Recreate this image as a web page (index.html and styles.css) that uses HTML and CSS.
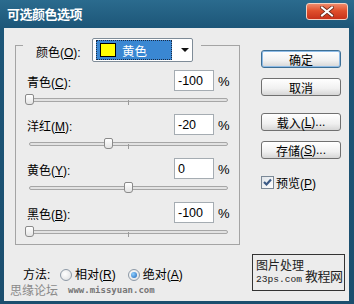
FILE: index.html
```html
<!DOCTYPE html>
<html>
<head>
<meta charset="utf-8">
<link rel="stylesheet" href="styles.css">
</head>
<body>
<div class="window">
  <div class="titlebar">
    <span class="title">可选颜色选项</span>
    <span class="close">
      <svg width="14" height="11" viewBox="0 0 14 11"><path d="M2 1.5 L12 9.5 M12 1.5 L2 9.5" stroke="#6b2a1a" stroke-width="3.6" stroke-linecap="square"/><path d="M2 1.5 L12 9.5 M12 1.5 L2 9.5" stroke="#fff" stroke-width="2" stroke-linecap="square"/></svg>
    </span>
  </div>
  <div class="client">
    <div class="main">
      <div class="group">
        <div class="legend">
          <span class="lbl">颜色(<u>O</u>):</span>
          <div class="select">
            <div class="sel-inner"><span class="swatch"></span><span class="sel-text">黄色</span></div>
            <span class="arrow"></span>
          </div>
        </div>
        <div class="field">
          <div class="field-row"><span class="flabel">青色(<u>C</u>):</span><span class="input">-100</span><span class="pct">%</span></div>
          <div class="slider"><div class="track"></div><div class="tick"></div><div class="thumb" style="left:9px"></div></div>
        </div>
        <div class="field">
          <div class="field-row"><span class="flabel">洋红(<u>M</u>):</span><span class="input">-20</span><span class="pct">%</span></div>
          <div class="slider"><div class="track"></div><div class="tick"></div><div class="thumb" style="left:88px"></div></div>
        </div>
        <div class="field">
          <div class="field-row"><span class="flabel">黄色(<u>Y</u>):</span><span class="input">0</span><span class="pct">%</span></div>
          <div class="slider"><div class="track"></div><div class="tick"></div><div class="thumb" style="left:108px"></div></div>
        </div>
        <div class="field">
          <div class="field-row"><span class="flabel">黑色(<u>B</u>):</span><span class="input">-100</span><span class="pct">%</span></div>
          <div class="slider"><div class="track"></div><div class="tick"></div><div class="thumb" style="left:9px"></div></div>
        </div>
      </div>
      <div class="method">
        <span class="mlabel">方法:</span>
        <span class="radio"></span><span class="rtext">相对(<u>R</u>)</span>
        <span class="radio on"></span><span class="rtext">绝对(<u>A</u>)</span>
      </div>
    </div>
    <div class="side">
      <div class="btn default">确定</div>
      <div class="btn">取消</div>
      <div class="btn gap">载入(<u>L</u>)...</div>
      <div class="btn">存储(<u>S</u>)...</div>
      <div class="check-row">
        <span class="checkbox"><svg width="11" height="11" viewBox="0 0 11 11"><path d="M2 5 L4.5 7.5 L9 2.5" fill="none" stroke="#3b5a86" stroke-width="2.2"/></svg></span>
        <span class="ctext">预览(<u>P</u>)</span>
      </div>
    </div>
    <div class="wm-cn">思缘论坛</div>
    <div class="wm-url">www.missyuan.com</div>
    <div class="wm-box">
      <div class="wm-left">
        <span class="wm-a">图片处理</span>
        <span class="wm-b">23ps.com</span>
      </div>
      <span class="wm-c">教程网</span>
    </div>
  </div>
</div>
</body>
</html>
```

FILE: styles.css
```css
* { box-sizing: border-box; }
html, body { margin: 0; padding: 0; }
body {
  width: 354px;
  height: 304px;
  overflow: hidden;
  background: #1b4e6e;
  font-family: "Liberation Sans", "Noto Sans CJK SC", sans-serif;
  font-size: 12px;
  color: #000;
}
u { text-decoration: underline; text-underline-offset: 1px; }
.window {
  width: 354px;
  height: 304px;
  display: flex;
  flex-direction: column;
  background: linear-gradient(#2b6b8e, #1d5678 28px, #1b4e6e);
}
.titlebar {
  height: 28px;
  flex: none;
  display: flex;
  justify-content: space-between;
  padding: 0 6px 0 7px;
}
.title {
  color: #fff;
  font-weight: bold;
  font-size: 13px;
  line-height: 28px;
  font-family: "Noto Sans CJK SC", sans-serif;
  letter-spacing: -0.5px;
}
.close {
  margin-top: 3px;
  width: 42px;
  height: 17px;
  border: 1px solid #f4d0c0;
  border-radius: 3px;
  background: linear-gradient(#f08a6a, #e0502c 45%, #c8321a);
  display: flex;
  align-items: center;
  justify-content: center;
}
.client {
  flex: 1;
  margin: 0 5px 3px 4px;
  background: #ececec;
  position: relative;
  display: flex;
}
.main {
  padding: 17px 0 0 11px;
}
.group {
  width: 225px;
  height: 200px;
  border: 1px solid #a4a4a4;
}
.legend {
  margin: -8px 0 0 7px;
  width: fit-content;
  height: 24px;
  padding: 0 8px 0 13px;
  background: #ececec;
  display: flex;
  align-items: center;
}
.lbl { width: 56px; padding-top: 2px; }
.select {
  width: 101px;
  height: 24px;
  border: 1px solid #7f8c98;
  border-radius: 2px;
  background: #fff;
  display: flex;
  align-items: center;
  padding: 0 0 0 3px;
}
.sel-inner {
  width: 76px;
  height: 20px;
  background: #3a87d2;
  outline: 1px dotted #1a2a44;
  outline-offset: -1px;
  display: flex;
  align-items: center;
  padding-left: 4px;
}
.swatch {
  width: 16px;
  height: 14px;
  background: #ffff00;
  border: 1px solid #000;
}
.sel-text { color: #fff; margin-left: 6px; font-size: 12.5px; }
.arrow {
  margin-left: 9px;
  width: 0;
  height: 0;
  border-left: 4px solid transparent;
  border-right: 4px solid transparent;
  border-top: 4px solid #111;
}
.legend + .field { margin-top: 8px; }
.field {
  height: 44px;
  padding: 0 0 0 11px;
}
.field-row {
  display: flex;
  align-items: center;
  height: 21px;
}
.flabel { width: 147px; padding-top: 2px; }
.input {
  width: 40px;
  height: 21px;
  border: 1px solid #a5acb2;
  background: #fff;
  padding: 3px 0 0 3px;
  font-size: 12.5px;
}
.pct { margin-left: 4px; font-size: 13px; padding-top: 1px; }
.slider {
  margin: 3px 0 0 -11px;
  height: 12px;
  position: relative;
  padding: 0 11px 0 13px;
}
.track {
  position: relative;
  top: 4px;
  height: 4px;
  border: 1px solid #a6a6a6;
  border-radius: 2px;
  background: #e2e2e2;
}
.tick {
  position: absolute;
  left: 112px;
  top: 6px;
  width: 1px;
  height: 5px;
  background: #9a9a9a;
}
.thumb {
  position: absolute;
  top: 0;
  width: 9px;
  height: 11px;
  border: 1px solid #8a8a8a;
  border-radius: 2px 2px 3px 3px;
  background: linear-gradient(#ffffff, #e4e4e4);
}
.method {
  margin: 22px 0 0 8px;
  display: flex;
  align-items: center;
  height: 16px;
  line-height: 14px;
}
.mlabel { width: 37px; }
.radio {
  width: 12px;
  height: 12px;
  border-radius: 50%;
  border: 1px solid #8d99a6;
  background: radial-gradient(circle at 40% 40%, #ffffff, #dadcde);
  display: flex;
  align-items: center;
  justify-content: center;
}
.radio.on::after {
  content: "";
  width: 6px;
  height: 6px;
  border-radius: 50%;
  background: radial-gradient(circle at 35% 35%, #8fd0ff, #1d64b8);
}
.rtext { margin-left: 3px; margin-right: 12px; }
.side {
  margin-left: 21px;
  padding-top: 22px;
  display: flex;
  flex-direction: column;
}
.btn {
  width: 80px;
  height: 18px;
  border: 1px solid #707070;
  border-radius: 3px;
  background: linear-gradient(#ffffff, #f0f0f0 60%, #d6d6d6);
  display: flex;
  align-items: center;
  justify-content: center;
  margin-bottom: 10px;
  font-size: 12px;
}
.btn.default {
  border-color: #3d6f95;
  box-shadow: inset 0 0 0 1px #8ebbe6;
}
.btn.gap { margin-top: 7px; }
.check-row {
  margin-top: 6px;
  display: flex;
  align-items: center;
  height: 14px;
}
.checkbox {
  width: 13px;
  height: 13px;
  border: 1px solid #7a8896;
  background: linear-gradient(135deg, #dfe4e9, #ffffff);
  display: flex;
  align-items: center;
  justify-content: center;
}
.ctext { margin-left: 2px; }
.wm-cn {
  position: absolute;
  left: 6px;
  top: 256px;
  font-size: 12px;
  color: #8a8a8a;
  font-family: "Noto Sans CJK SC", sans-serif;
  line-height: 12px;
}
.wm-url {
  position: absolute;
  left: 64px;
  top: 258px;
  font-family: "DejaVu Sans Mono", monospace;
  font-size: 9px;
  font-weight: bold;
  color: #777;
  line-height: 9px;
}
.wm-box {
  position: absolute;
  left: 248px;
  top: 226px;
  width: 93px;
  height: 37px;
  border: 1px solid #333;
  display: flex;
  align-items: flex-end;
  padding: 0 0 5px 3px;
  white-space: nowrap;
}
.wm-left {
  flex: none;
  display: flex;
  flex-direction: column;
}
.wm-a { font-size: 12px; line-height: 13px; color: #222; font-family: "Noto Sans CJK SC", sans-serif; }
.wm-b { font-size: 9.6px; line-height: 10px; margin-top: 4px; color: #222; font-family: "Liberation Mono", monospace; }
.wm-c { flex: none; font-size: 13px; line-height: 16px; margin-bottom: 1px; color: #222; letter-spacing: -0.5px; margin-left: 1px; font-family: "Noto Sans CJK SC", sans-serif; }
```
